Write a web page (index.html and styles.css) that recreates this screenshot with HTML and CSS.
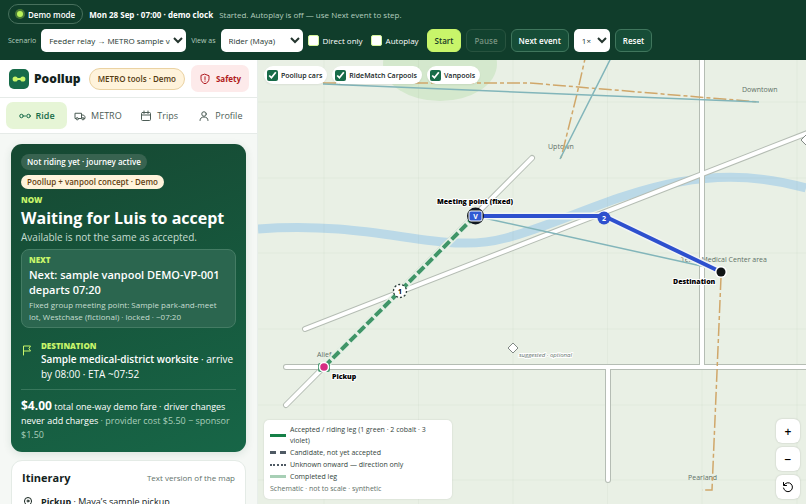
FILE: index.html
```html
<!DOCTYPE html>
<html lang="en">
<head>
<meta charset="utf-8">
<title>Poollup</title>
<meta name="viewport" content="width=device-width, initial-scale=1">
<link rel="stylesheet" href="styles.css">
</head>
<body>
<header class="demo">
  <div class="demo-row status">
    <span class="mode"><i class="dot"></i>Demo mode</span>
    <strong class="clock">Mon 28 Sep · 07:00 · demo clock</strong>
    <span class="message">Started. Autoplay is off — use Next event to step.</span>
  </div>
  <div class="demo-row controls">
    <label class="hint" for="scenario">Scenario</label>
    <select id="scenario" class="scenario"><option>Feeder relay → METRO sample vanpool</option></select>
    <label class="hint" for="view">View as</label>
    <select id="view" class="view"><option>Rider (Maya)</option></select>
    <label class="check"><input type="checkbox">Direct only</label>
    <label class="check"><input type="checkbox">Autoplay</label>
    <button class="btn start">Start</button>
    <button class="btn" disabled>Pause</button>
    <button class="btn">Next event</button>
    <select class="speed" aria-label="Speed"><option>1×</option></select>
    <button class="btn">Reset</button>
  </div>
</header>
<div class="app">
  <aside class="side">
    <div class="brand">
      <svg class="logo" viewBox="0 0 20 20"><rect width="20" height="20" rx="5" fill="#176b49"/><path d="M6.5 10h7" stroke="#c8f56a" stroke-width="2"/><circle cx="6.2" cy="10" r="2.6" fill="#c8f56a"/><circle cx="13.8" cy="10" r="2.6" fill="#c8f56a"/></svg>
      <span class="name">Poollup</span>
      <span class="tools">METRO tools · Demo</span>
      <button class="safety"><svg class="icon" viewBox="0 0 24 24"><path d="M12 2.500 20 5.500v6c0 5-3.300 8.300-8 10-4.700-1.700-8-5-8-10v-6z"/><path d="M12 7.500v5.500M12 16v.5"/></svg>Safety</button>
    </div>
    <nav class="tabs">
      <a class="tab on" href="#ride"><svg class="icon" viewBox="0 0 24 24"><circle cx="5" cy="12" r="3.500"/><circle cx="19" cy="12" r="3.500"/><path d="M11 12h2"/></svg>Ride</a>
      <a class="tab" href="#metro"><svg class="icon" viewBox="0 0 24 24"><path d="M4 17H2V6.500h13V17H9M15 10h4l3 3.500V17h-1"/><circle cx="6.500" cy="17.500" r="2.300"/><circle cx="18" cy="17.500" r="2.300"/></svg>METRO</a>
      <a class="tab" href="#trips"><svg class="icon" viewBox="0 0 24 24"><rect x="3" y="5" width="18" height="16" rx="2"/><path d="M3 10h18M8 2v5M16 2v5"/></svg>Trips</a>
      <a class="tab" href="#profile"><svg class="icon" viewBox="0 0 24 24"><circle cx="12" cy="8" r="4.500"/><path d="M4 21c0-4.500 3-7 8-7s8 2.500 8 7"/></svg>Profile</a>
    </nav>
    <main class="content">
      <section class="hero">
        <span class="tag">Not riding yet · journey active</span>
        <span class="tag cream">Poollup + vanpool concept · Demo</span>
        <div class="eyebrow">NOW</div>
        <h1>Waiting for Luis to accept</h1>
        <p class="sub">Available is not the same as accepted.</p>
        <div class="next">
          <div class="eyebrow">NEXT</div>
          <h2>Next: sample vanpool DEMO-VP-001 departs 07:20</h2>
          <p>Fixed group meeting point: Sample park-and-meet lot, Westchase (fictional) · locked · ~07:20</p>
        </div>
        <div class="dest">
          <svg class="icon" viewBox="0 0 24 24"><path d="M5 22V4h14l-3 5 3 5H5"/></svg>
          <div>
            <div class="eyebrow">DESTINATION</div>
            <p><b>Sample medical-district worksite</b> · arrive by 08:00 · ETA ~07:52</p>
          </div>
        </div>
        <p class="fare"><b>$4.00</b> total one-way demo fare · driver changes never add charges <span>· provider cost $5.50 − sponsor $1.50</span></p>
      </section>
      <section class="itinerary">
        <div class="it-head"><h2>Itinerary</h2><span>Text version of the map</span></div>
        <div class="stop"><svg class="icon" viewBox="0 0 24 24"><path d="M12 22c-4-4.500-7-7.500-7-12a7 7 0 0 1 14 0c0 4.500-3 7.500-7 12z"/><circle cx="12" cy="10" r="2"/></svg><span><b>Pickup</b> · Maya’s sample pickup</span></div>
      </section>
    </main>
  </aside>
  <div class="map">
    <svg class="canvas" viewBox="258 60 548 444" preserveAspectRatio="xMidYMid slice" role="img" aria-label="Journey map">
      <ellipse cx="440" cy="64" rx="57" ry="37" fill="#d4e8cd"/>
      <path d="M258 229C380 220 440 256 506 238C590 216 680 152 806 188" fill="none" stroke="#bbd9e7" stroke-width="9"/>
      <path d="M324 60v444M418.500 60v444M513 60v444M607.500 60v444M702 60v444M797 60v444M258 102h548M258 178h548M258 253h548M258 329h548M258 405h548M258 480h548" stroke="#143c28" stroke-opacity=".03"/>
      <g class="road-edge"><path d="M305 329 810 132M286 367H810M286 405 532 158M702 50V367M608 367V480"/></g>
      <g class="road-fill"><path d="M305 329 810 132"/><path d="M286 367H810"/><path d="M286 405 532 158"/><path d="M702 50V367"/><path d="M608 367V480"/></g>
      <g class="names"><text x="742" y="92">Downtown</text><text x="548" y="149">Uptown</text><text x="681" y="262">Texas Medical Center area</text><text x="317" y="357">Alief</text><text x="688" y="480">Pearland</text></g>
      <path class="rail" d="M323 83H530L759 102M587 50 577 94 561 158M721 277 712 490H702"/>
      <path d="M323 84 759 102M615 50 560 159M475 216 706 267" fill="none" stroke="#82b5ba" stroke-width="1.500"/>
      <path d="M475 216 324 367" stroke="#e5f0e5" stroke-width="7"/>
      <path d="M475 216 324 367" stroke="#409568" stroke-width="4" stroke-dasharray="9 3"/>
      <path d="M475 216H604L721 272" fill="none" stroke="#f2f5f4" stroke-width="7"/>
      <path d="M475 216H604L721 272" fill="none" stroke="#2e50ce" stroke-width="4"/>
      <circle cx="604" cy="218" r="6.500" fill="#2e50ce"/><text class="num light" x="604" y="221">2</text>
      <circle cx="400" cy="291" r="6.500" fill="#fff" stroke="#283c39" stroke-width="1.300" stroke-dasharray="2 2"/><text class="num" x="400" y="294">1</text>
      <circle cx="475.500" cy="216" r="8.500" fill="#111820"/><rect x="469" y="211" width="13" height="10" rx="2" fill="#3159d3" stroke="#fff"/><text class="num light" x="475.500" y="218.500">V</text>
      <rect x="318" y="363" width="12" height="9" rx="2" fill="#4b9b73"/><circle cx="324" cy="367" r="4.500" fill="#d62c82" stroke="#fff" stroke-width="1.500"/>
      <circle cx="721" cy="272" r="6" fill="#fff"/><circle cx="721" cy="272" r="4.500" fill="#101415"/>
      <path d="M513 343 518 348 513 353 508 348ZM806 135 801 140 806 145" fill="#fff" stroke="#818985"/>
      <g class="labels"><text x="437" y="204">Meeting point (fixed)</text><text x="332" y="379">Pickup</text><text x="673" y="284">Destination</text></g>
      <text class="optional" x="519" y="357">suggested · optional</text>
    </svg>
    <div class="filters">
      <label><input type="checkbox" checked>Poollup cars</label>
      <label><input type="checkbox" checked>RideMatch Carpools</label>
      <label><input type="checkbox" checked>Vanpools</label>
    </div>
    <div class="legend">
      <div><i class="line"></i><span>Accepted / riding leg (1 green · 2 cobalt · 3 violet)</span></div>
      <div><i class="line dash"></i><span>Candidate, not yet accepted</span></div>
      <div><i class="line dots"></i><span>Unknown onward — direction only</span></div>
      <div><i class="line done"></i><span>Completed leg</span></div>
      <small>Schematic · not to scale · synthetic</small>
    </div>
    <div class="zoom">
      <button aria-label="Zoom in">+</button>
      <button aria-label="Zoom out">−</button>
      <button aria-label="Reset view"><svg class="icon" viewBox="0 0 24 24"><path d="M4 8a9 9 0 1 1-1 6M3 3v6h6"/></svg></button>
    </div>
  </div>
</div>
</body>
</html>
```

FILE: styles.css
```css
* { box-sizing: border-box; }
body { margin: 0; height: 100vh; display: flex; flex-direction: column; overflow: hidden; font-family: "Open Sans", "Noto Sans", sans-serif; font-size: 8px; color: #14231d; background: #f5f8f5; }
button, select, input { font: inherit; margin: 0; }
h1, h2, p { margin: 0; }
.icon { width: 12px; height: 12px; fill: none; stroke: currentColor; stroke-width: 2; stroke-linejoin: round; stroke-linecap: round; flex: none; }

.demo { flex: none; background: #103d2b; color: #fff; padding: 4px 8px 8px; display: flex; flex-direction: column; gap: 5px; }
.demo-row { display: flex; align-items: center; gap: 6px; white-space: nowrap; }
.mode { display: flex; align-items: center; gap: 5px; height: 20px; padding: 0 7px; border: 1px solid #48705d; border-radius: 10px; font-weight: 600; }
.dot { width: 6px; height: 6px; margin-left: 1px; border-radius: 50%; background: #b9f35a; box-shadow: 0 0 0 2px #4a7938; }
.clock { font-weight: 700; }
.message { color: #b4cdbf; }
.controls { gap: 5px; }
.hint { font-size: 7px; color: #b4cdbf; }
.demo select { height: 23px; border: 0; border-radius: 5px; background: #fff; color: #24352e; padding: 0 0 0 4px; }
.scenario { width: 145px; }
.view { width: 82px; }
.speed { width: 36px; }
.check { display: flex; align-items: center; gap: 4px; margin-right: 3px; }
.check input { appearance: none; width: 11px; height: 11px; border-radius: 2px; background: #fff; border: 1px solid #d6f49c; }
.btn { height: 23px; padding: 0 7px; border: 1px solid #40765d; border-radius: 6px; background: #164d37; color: #fff; font-weight: 600; }
.btn.start { background: #c8f56a; border-color: #c8f56a; color: #173826; }
.btn:disabled { background: #12422f; border-color: #28533f; color: #75917f; }

.app { flex: 1; min-height: 0; display: flex; }
.side { width: 32%; min-width: 258px; flex: none; display: flex; flex-direction: column; overflow: hidden; border-right: 1px solid #e8eeea; }
.brand { flex: none; display: flex; align-items: center; height: 38px; padding: 0 8px 0 9px; background: #fff; border-bottom: 1px solid #e6ebe8; white-space: nowrap; }
.logo { flex: none; width: 20px; height: 20px; margin-right: 5px; }
.name { font-size: 12px; font-weight: 800; }
.tools { margin-left: auto; height: 22px; padding: 0 8px; display: flex; align-items: center; border: 1px solid #ead2a2; border-radius: 11px; background: #fff3db; color: #553b12; font-weight: 600; }
.safety { margin-left: 6px; height: 27px; padding: 0 8px; display: flex; align-items: center; gap: 5px; border: 0; border-radius: 7px; background: #fdeaea; color: #b01a20; font-weight: 700; }
.tabs { flex: none; display: flex; height: 36px; padding: 4px 6px; background: #fff; border-bottom: 1px solid #e6ebe8; }
.tab { flex: 1 1 0; display: flex; align-items: center; justify-content: center; gap: 5px; color: #4c5d56; text-decoration: none; font-size: 9px; font-weight: 500; border-radius: 7px; }
.tab.on { background: #e6f5d6; color: #176b49; font-weight: 600; }

.content { padding: 10px 11px 0; display: flex; flex-direction: column; gap: 8px; }
.hero { flex: none; padding: 10px; border-radius: 11px; color: #fff; background: linear-gradient(160deg, #164832, #176647); box-shadow: 0 2px 8px #1648321f; display: flex; flex-direction: column; align-items: flex-start; }
.tag { height: 16px; line-height: 16px; padding: 0 6px; border-radius: 8px; background: #386350; font-weight: 600; margin-bottom: 5px; }
.tag.cream { height: 14px; line-height: 14px; background: #fff3db; color: #643f12; }
.eyebrow { color: #c8f56a; font-size: 8px; line-height: 12px; font-weight: 800; }
h1 { font-size: 16px; line-height: 24px; font-weight: 700; white-space: nowrap; }
.sub { font-size: 10px; color: #c6ddd1; line-height: 14px; }
.next { align-self: stretch; margin-top: 5px; padding: 4px 7px; border: 1px solid #447c64; border-radius: 8px; background: #2b664f; }
.next h2 { font-size: 11px; line-height: 15px; font-weight: 600; margin-top: 1px; }
.next p { line-height: 12px; color: #c6ddd1; margin-top: 2px; }
.dest { display: flex; gap: 8px; padding: 12px 0 7px; line-height: 15px; align-self: stretch; }
.dest p { font-size: 10px; }
.dest b { font-weight: 600; }
.dest .icon { margin-top: 4px; color: #c8f56a; }
.fare { align-self: stretch; border-top: 1px solid #38775c; padding-top: 9px; font-size: 9px; line-height: 14px; }
.fare b { font-size: 12px; }
.fare span { color: #a9cebb; }
.itinerary { flex: none; background: #fff; border: 1px solid #e4ebe6; border-radius: 11px; padding: 8px 10px; }
.it-head { display: flex; justify-content: space-between; align-items: center; line-height: 18px; }
.it-head h2 { font-size: 11px; }
.it-head span { color: #63736b; }
.stop { display: flex; align-items: center; gap: 7px; margin-top: 8px; font-size: 9px; }

.map { flex: 1; position: relative; background: #e9f0e5; overflow: hidden; }
.canvas { display: block; width: 100%; height: 100%; }
.road-edge { fill: none; stroke: #b5bdb4; stroke-width: 6; stroke-linecap: round; }
.road-fill { fill: none; stroke: #fff; stroke-width: 4; stroke-linecap: round; }
.rail { fill: none; stroke: #d0a76a; stroke-width: 1.5; stroke-dasharray: 13 3 4 3; }
.names { font-size: 7px; fill: #617067; }
.num { font-size: 7px; font-weight: 700; text-anchor: middle; }
.light { fill: #fff; }
.labels { font-size: 7px; font-weight: 800; paint-order: stroke; stroke: #fff; stroke-width: 2; }
.optional { font-size: 6px; font-style: italic; fill: #62716a; paint-order: stroke; stroke: #fff; stroke-width: 2; }
.filters { position: absolute; top: 6px; left: 6px; display: flex; gap: 5px; white-space: nowrap; }
.filters label { height: 18px; padding: 0 5px 0 3px; display: flex; align-items: center; gap: 3px; border-radius: 9px; background: #fff; font-size: 7px; font-weight: 600; box-shadow: 0 1px 2px #0001; }
.filters input { width: 11px; height: 11px; accent-color: #176b49; }
.legend { position: absolute; left: 6px; bottom: 5px; width: 188px; padding: 4px 6px; display: flex; flex-direction: column; gap: 1px; border-radius: 5px; background: #fff; font-size: 7px; line-height: 11px; color: #33443c; box-shadow: 0 0 2px #0002; }
.legend div { display: flex; align-items: center; gap: 4px; }
.legend small { font-size: 7px; line-height: 12px; color: #617067; }
.line { width: 16px; flex: none; border-top: 3px solid #168047; }
.dash { border-top: 3px dashed #4f5a64; }
.dots { border-top: 2px dotted #4f5a64; }
.done { border-color: #a7cfb5; }
.zoom { position: absolute; right: 6px; bottom: 5px; display: flex; flex-direction: column; gap: 4px; }
.zoom button { width: 24px; height: 24px; padding: 0; display: flex; align-items: center; justify-content: center; border: 0; border-radius: 6px; background: #fff; font-size: 12px; font-weight: 600; box-shadow: 0 0 2px #0003; }
```
